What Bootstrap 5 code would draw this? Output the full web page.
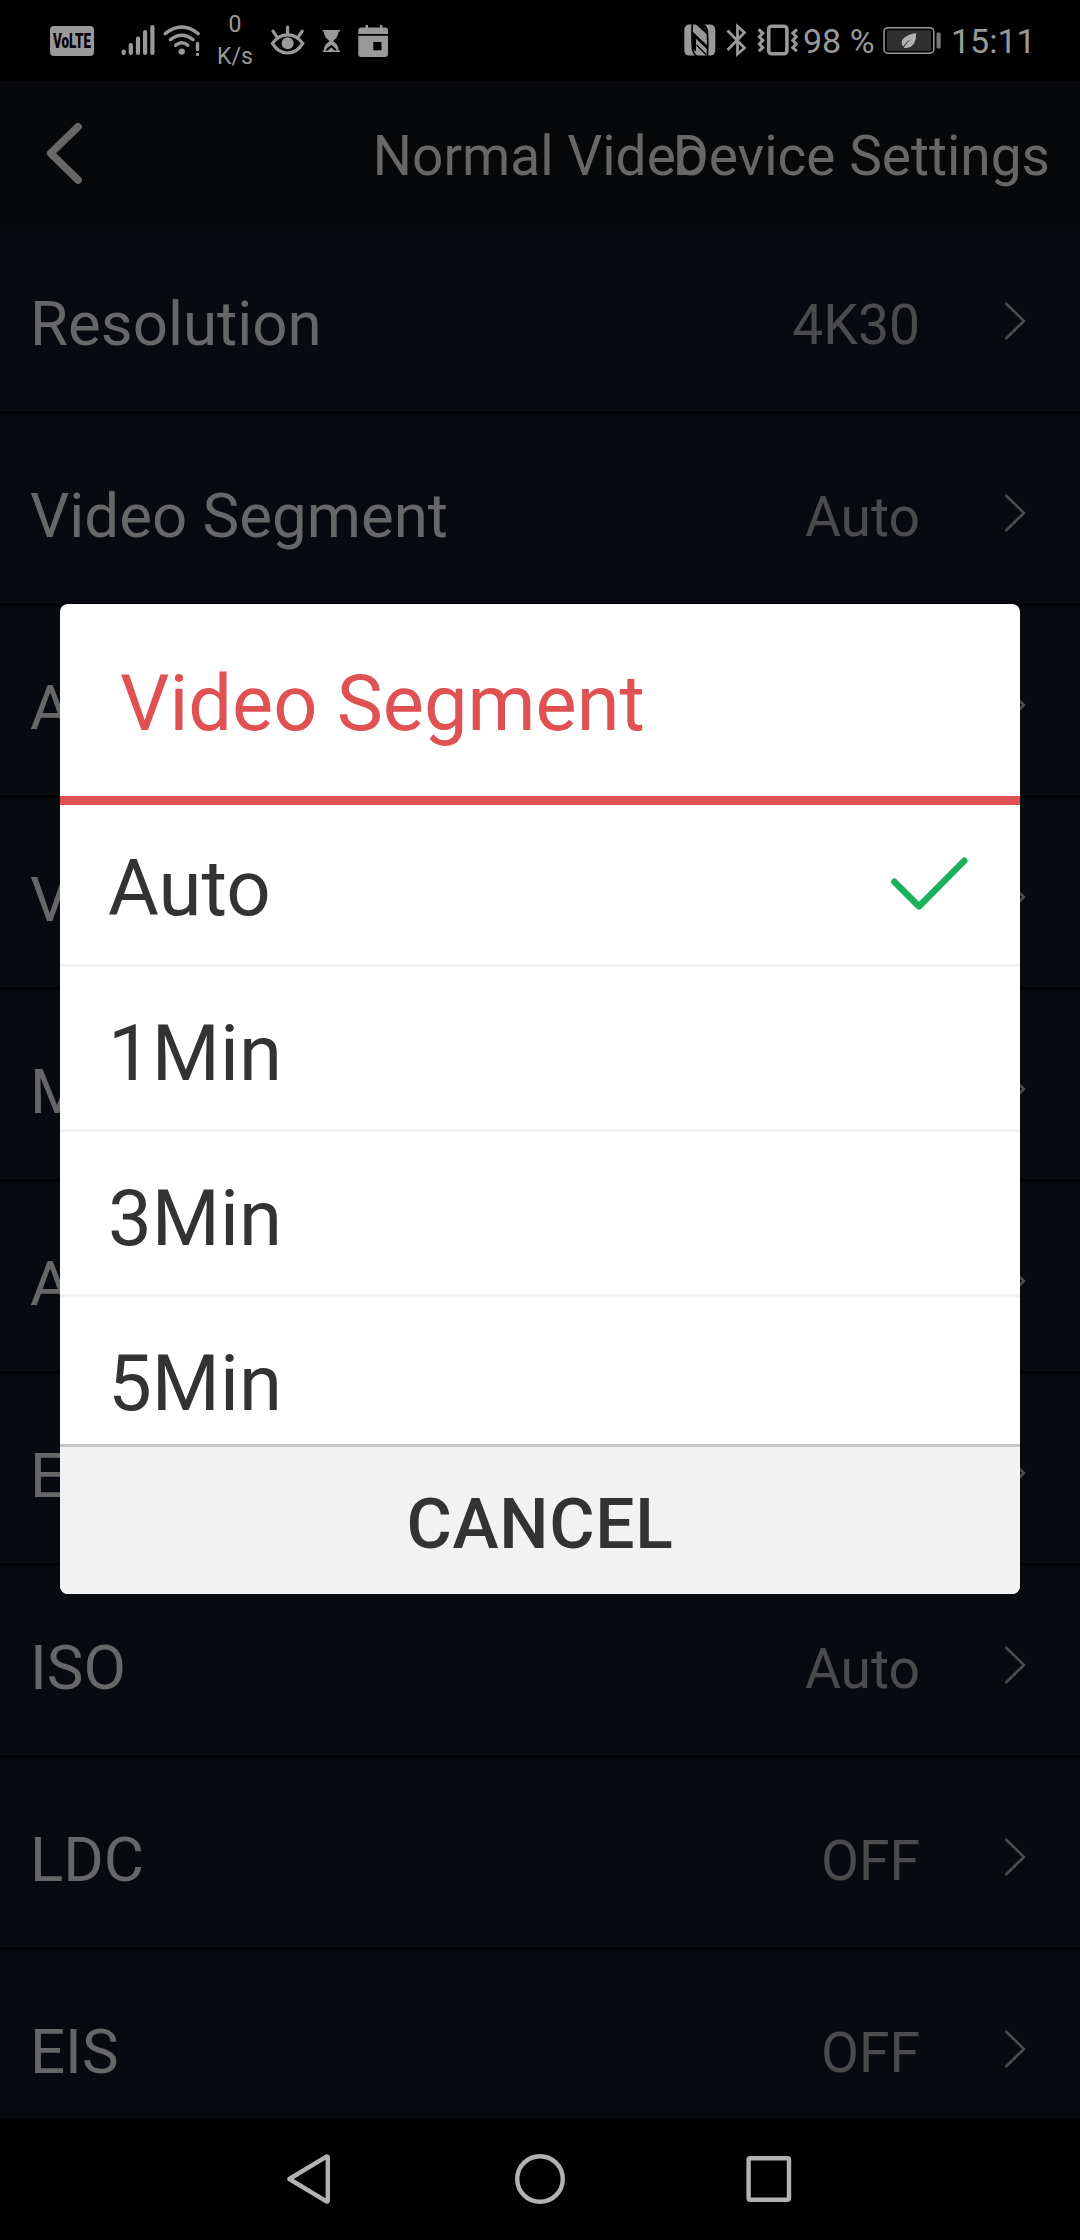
<!DOCTYPE html>
<html lang="en">
<head>
<meta charset="utf-8">
<meta name="viewport" content="width=device-width, initial-scale=1">
<title>Device Settings</title>
<link href="https://cdn.jsdelivr.net/npm/bootstrap@5.3.0/dist/css/bootstrap.min.css" rel="stylesheet">
<style>
  body { font-family: Roboto, "Liberation Sans", sans-serif; background: #000; line-height: 1.2; }
  .phone { width: 1080px; height: 2240px; background: #070a0e; }
  .phone svg { display: block; flex: none; }
  .status-strip { height: 81px; background: #000; color: #999; font-size: 34px; }
  .status-strip svg { height: 81px; }
  .net-rate { width: 59px; font-size: 23px; line-height: 32px; padding: 1px 0 0 1px; }
  .battery-level { width: 77px; padding: 1px 0 0 3px; }
  .clock-label { width: 136px; padding: 1px 0 0 7px; }
  .title-strip { height: 144px; background: #070809; color: #676767; font-size: 55px; padding-bottom: 3px; }
  .title-center { padding-top: 9px; }
  .title-action { right: 30px; top: 0; height: 141px; padding-top: 9px; }
  .setting-list { margin-top: -3px; overflow: hidden; }
  .setting-row { height: 192px; flex: none; border-bottom: 3px solid #020204; padding: 0 52px 0 30px; }
  .setting-name { color: #676767; font-size: 61.800px; padding-top: 15px; }
  .setting-value { color: #4b4b4c; font-size: 55.200px; padding-top: 17px; margin-right: 82px; }
  .setting-row svg { margin-top: 8px; }
  .nav-strip { height: 122px; flex: none; background: #000; }
  .picker { left: 60px; top: 604px; width: 960px; height: 990px; border-radius: 8px; background: #fff; color: #333; font-size: 78px; overflow: hidden; }
  .picker-title { height: 201px; flex: none; border-bottom: 9px solid #df5152; color: #df5152; font-size: 77.600px; padding: 8px 0 0 60px; }
  .picker-list { margin-top: -3px; height: 642px; overflow: hidden; }
  .picker-row { height: 165px; flex: none; border-bottom: 3px solid #f2f2f2; padding: 0 50px 0 48px; }
  .picker-row span { padding-top: 12px; }
  .picker-cancel { height: 150px; margin-top: 1px; border: 0; border-top: 3px solid #c6c6c6; background: #f2f2f2; color: #333; font-size: 69.500px; font-weight: 500; letter-spacing: .7px; padding-top: 10px; }
</style>
</head>
<body>
<div class="phone position-relative d-flex flex-column overflow-hidden">

  <div class="status-strip d-flex align-items-center flex-shrink-0">
    <svg width="110" viewBox="0 0 110 81"><rect x="50" y="26" width="44" height="30" rx="4" fill="#999"/><text x="53" y="48" font-size="21" font-weight="900" textLength="38" lengthAdjust="spacingAndGlyphs" fill="#000">VoLTE</text></svg>
    <svg width="50" viewBox="110 0 50 81" stroke="#999" stroke-width="4.2" stroke-linecap="round"><path d="M123.7 51.5v1.6M130.8 45v8M138 38.5v14.5M145.1 32v21M152.4 27v26"/></svg>
    <svg width="45" viewBox="160 0 45 81" fill="none" stroke="#999" stroke-width="3.4" stroke-linecap="round"><path d="M165.2 33.6Q181.7 20.5 198.2 33.6M170.4 39.6Q181.7 31 193 39.6M175.6 45.3Q181.7 40 187.8 45.3M197.5 43.5v6M197.5 54.4v.1"/><circle cx="181.7" cy="51.6" r="3.2" fill="#999" stroke="none"/></svg>
    <div class="net-rate text-center">0<br>K/s</div>
    <svg width="48" viewBox="264 0 48 81" fill="none" stroke="#999" stroke-width="3.2" stroke-linecap="round"><path d="M272.4 43.4Q278.5 34.8 287.6 34.8T302.8 43.4Q297 53 287.6 53T272.4 43.4ZM287.6 27v6M273 31.2l3.2 4.6M302.2 31.2l-3.2 4.6"/><circle cx="287.6" cy="43.2" r="6" fill="#999" stroke="none"/></svg>
    <svg width="38" viewBox="312 0 38 81" fill="#999"><path d="M322.5 30h17.5v1.6h-1.4c0 4-2 7-5.6 9.4c3.6 2.4 5.6 5.4 5.6 9.4h1.4v1.6h-17.5v-1.6h1.4c0-4 2-7 5.6-9.4c-3.6-2.4-5.6-5.4-5.6-9.4h-1.4z"/><path d="M325.6 50.4c1-2 3-3.800 5.600-5.400c2.600 1.600 4.600 3.400 5.600 5.400l-2.200 0l-3.400-2.900l-3.400 2.900z" fill="#000"/></svg>
    <svg width="50" viewBox="350 0 50 81"><path d="M365.6 25h2.4v2.5h12V25h2.4v2.500h2.600a3 3 0 0 1 3 3V54a3 3 0 0 1-3 3H361.300a3 3 0 0 1-3-3V30.500a3 3 0 0 1 3-3h4.300z" fill="#999"/><path d="M358 34h30v1.700h-30zM373.300 42h8.200v8.200h-8.200z"/></svg>

    <svg class="ms-auto" width="44" viewBox="676 0 44 81"><rect x="684.300" y="24.600" width="31" height="31" rx="5" fill="#999"/><path d="M692.300 24Q691.500 38 692.500 49Q693 53.500 697 56.500M707.400 56.500Q708.300 43 707.300 31Q706.800 27 702.800 24" fill="none" stroke="#000" stroke-width="1.700"/><path d="M692.500 31.500L707.500 45.800V49.500L696 38.800V51.500L693 49.500zM695.500 24L707 34.500V31L702.800 24z"/><path d="M696.500 45L706 54.500" fill="none" stroke="#000" stroke-width="1.200"/></svg>
    <svg width="34" viewBox="720 0 34 81" fill="none" stroke="#999" stroke-width="2.800"><path d="M727.500 30.500L744.500 48L737.500 54V26.300L744.500 32.500L727.500 50"/></svg>
    <svg width="46" viewBox="754 0 46 81" fill="none" stroke="#999"><rect x="768.700" y="26.200" width="18.200" height="27.600" rx="3" stroke-width="3.600"/><path d="M758.600 29.500l4.200 3.700-3.400 3.600 3.400 3.600-3.400 3.600 3.400 3.600-4 3.600M797 29.500l-4.200 3.700 3.400 3.600-3.400 3.600 3.400 3.600-3.400 3.600 4 3.600" stroke-width="3"/></svg>
    <div class="battery-level text-nowrap">98 %</div>
    <svg width="67" viewBox="877 0 67 81"><rect x="884" y="27.700" width="49.800" height="25.600" rx="4" fill="none" stroke="#999" stroke-width="1.500"/><rect x="887" y="30.300" width="44" height="20.500" rx="1.500" fill="#303030"/><rect x="936.500" y="32.500" width="4.200" height="16" rx="1.500" fill="#777"/><path d="M916.200 33Q901 36 901.700 43.500Q902 46 903.300 46.200Q907 41 911.500 38.700Q907 42 903.500 48L905 48Q911 48 914 43.500Q916.500 39 916.200 33z" fill="#b2b2b2"/></svg>
    <div class="clock-label">15:11</div>
  </div>

  <header class="title-strip position-relative d-flex align-items-center justify-content-center flex-shrink-0">
    <svg class="position-absolute start-0 top-0" width="110" height="144" viewBox="0 81 110 144" fill="none" stroke="#676767" stroke-width="7.600" stroke-linecap="round" stroke-linejoin="round"><path d="M78 126.800L50.700 153.300L78 180"/></svg>
    <div class="title-center">Normal Video</div>
    <div class="title-action position-absolute d-flex align-items-center">Device Settings</div>
  </header>

  <main class="setting-list d-flex flex-column flex-grow-1" id="settings"></main>

  <nav class="nav-strip">
    <svg width="1080" height="122" viewBox="0 2118 1080 122" fill="none" stroke="#b2b2b2" stroke-width="4.400" stroke-linejoin="round"><path d="M289.300 2179L326.500 2156.600Q327.800 2156 327.800 2157.500V2200.500Q327.800 2202 326.500 2201.400Z"/><circle cx="540" cy="2179" r="22.800"/><rect x="748.600" y="2158.200" width="40.400" height="41.500" rx="1.500"/></svg>
  </nav>

  <section class="picker position-absolute d-flex flex-column" role="dialog">
    <div class="picker-title d-flex align-items-center position-relative z-1">Video Segment</div>
    <div class="picker-list d-flex flex-column">
      <div class="picker-row d-flex align-items-center justify-content-between"><span>Auto</span><svg width="64" height="56" viewBox="889 855 64 56" class="overflow-visible" fill="none" stroke="#1bb05a" stroke-width="6.500" stroke-linecap="round" stroke-linejoin="round"><path d="M877.300 881.700L902 906.400L947.300 860.700"/></svg></div>
      <div class="picker-row d-flex align-items-center"><span>1Min</span></div>
      <div class="picker-row d-flex align-items-center"><span>3Min</span></div>
      <div class="picker-row d-flex align-items-center"><span>5Min</span></div>
    </div>
    <button class="picker-cancel w-100 flex-shrink-0">CANCEL</button>
  </section>
</div>
<script src="https://cdn.jsdelivr.net/npm/bootstrap@5.3.0/dist/js/bootstrap.bundle.min.js"></script>
<script>
  const rows = [["Resolution", "4K30"], ["Video Segment", "Auto"], ["A", ""], ["V", ""], ["M", ""], ["A", ""], ["E", ""], ["ISO", "Auto"], ["LDC", "OFF"], ["EIS", "OFF"]];
  document.getElementById("settings").innerHTML = rows.map(([name, value]) => `
    <div class="setting-row d-flex align-items-center">
      <span class="setting-name">${name}</span>
      <span class="setting-value ms-auto">${value}</span>
      <svg width="26" height="44" viewBox="0 0 26 44" fill="none" stroke="#4c4c4c" stroke-width="2.600"><path d="M3.500 4L22 22L3.500 40"/></svg>
    </div>`).join("");
</script>
</body>
</html>
